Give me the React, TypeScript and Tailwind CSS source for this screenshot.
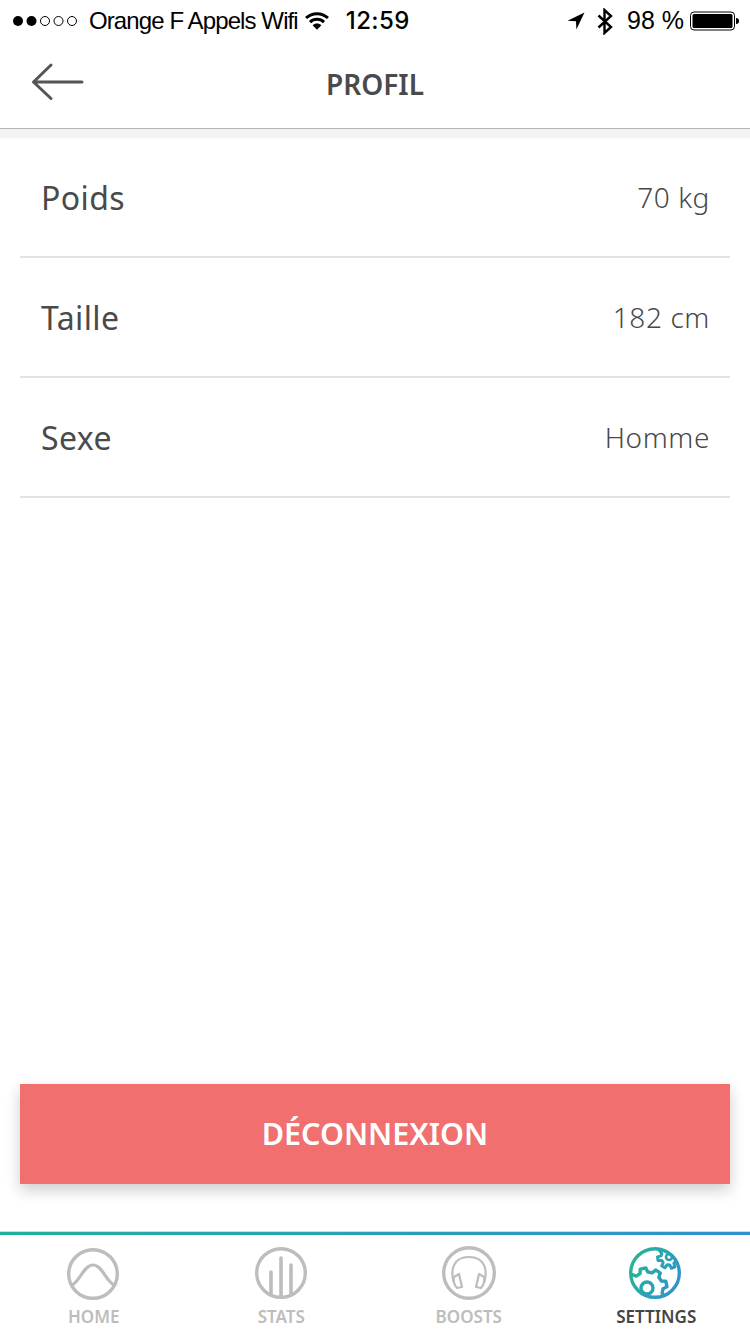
import React from "react";

const ui = { fontFamily: '"Noto Sans", "Open Sans", sans-serif' };
const ios = { fontFamily: '"Liberation Sans", Arial, sans-serif' };
const clock = { fontFamily: 'Inter, "Liberation Sans", sans-serif' };

// Outline of a toothed wheel, used twice in the settings glyph.
function gearPath(cx: number, cy: number, inner: number, outer: number, teeth: number, phase: number) {
  const step = (Math.PI * 2) / teeth;
  const pts: string[] = [];
  for (let i = 0; i < teeth; i++) {
    const a = phase + i * step;
    const offsets: [number, number][] = [
      [-0.32, inner],
      [-0.18, outer],
      [0.18, outer],
      [0.32, inner],
    ];
    offsets.forEach(([o, r]) => {
      const t = a + o * step;
      pts.push(`${(cx + r * Math.cos(t)).toFixed(2)} ${(cy + r * Math.sin(t)).toFixed(2)}`);
    });
  }
  return `M${pts.join(" L")} Z`;
}

function SignalDots() {
  return (
    <svg width="68" height="14" viewBox="0 0 68 14" className="shrink-0">
      <circle cx="6" cy="7" r="5" fill="#000" />
      <circle cx="19.5" cy="7" r="5" fill="#000" />
      {[33, 46.5, 60].map((cx) => (
        <circle key={cx} cx={cx} cy="7" r="4.5" fill="none" stroke="#000" strokeWidth="1" />
      ))}
    </svg>
  );
}

function Wifi() {
  return (
    <svg width="24" height="18" viewBox="0 0 24 18" className="shrink-0">
      <path d="M1 6 C7.2 0.2 16.8 0.2 23 6" fill="none" stroke="#000" strokeWidth="3" />
      <path d="M5 10.2 C9 6.4 15 6.4 19 10.2" fill="none" stroke="#000" strokeWidth="3" />
      <path d="M7.6 13.2 C10.2 11 13.8 11 16.4 13.2 L12 17.8 Z" fill="#000" />
    </svg>
  );
}

function Location() {
  return (
    <svg width="18" height="18" viewBox="0 0 18 18" className="shrink-0">
      <path d="M17.5 0.5 L0.5 8.8 L9 9.2 L9.4 17.5 Z" fill="#000" />
    </svg>
  );
}

function Bluetooth() {
  return (
    <svg width="16" height="27" viewBox="0 0 16 27" className="shrink-0">
      <path d="M1.5 7.5 L14 19 L7.5 25 V2 L14 8 L1.5 19.5" fill="none" stroke="#000" strokeWidth="2.4" />
    </svg>
  );
}

function Battery() {
  return (
    <svg width="50" height="20" viewBox="0 0 50 20" className="shrink-0">
      <rect x="0.5" y="1" width="44" height="18" rx="3.5" fill="none" stroke="#000" strokeWidth="1" />
      <rect x="2.5" y="3" width="40" height="14" rx="1.5" fill="#000" />
      <path d="M46 7 C48 7 49 8.2 49 10 C49 11.8 48 13 46 13 Z" fill="#000" />
    </svg>
  );
}

function BackArrow() {
  return (
    <svg width="54" height="40" viewBox="0 0 54 40">
      <path d="M52 21 H3.5 M21 4 L3.5 21 L21 37.5" fill="none" stroke="#555555" strokeWidth="3" strokeLinecap="round" strokeLinejoin="round" />
    </svg>
  );
}

function HomeIcon() {
  return (
    <svg width="54" height="54" viewBox="0 0 54 54">
      <circle cx="26" cy="27" r="24.3" fill="none" stroke="#bdbdbd" strokeWidth="3.4" />
      <path d="M5 38 C13 34 17 18 26 18 C35 18 39 34 47 38" fill="none" stroke="#bdbdbd" strokeWidth="3.2" />
    </svg>
  );
}

function StatsIcon() {
  return (
    <svg width="54" height="54" viewBox="0 0 54 54">
      <circle cx="27" cy="26" r="24.3" fill="none" stroke="#bdbdbd" strokeWidth="3.4" />
      <path d="M17 48 V25 M27 50 V11 M37 48 V18" fill="none" stroke="#bdbdbd" strokeWidth="3.6" strokeLinecap="round" />
    </svg>
  );
}

function BoostsIcon() {
  return (
    <svg width="56" height="56" viewBox="0 0 56 56">
      <circle cx="28" cy="27" r="25.3" fill="none" stroke="#bdbdbd" strokeWidth="3.4" />
      <path d="M13 37 C9 24 12 11 28 11 C44 11 47 24 43 37" fill="none" stroke="#bdbdbd" strokeWidth="2.2" />
      <path d="M18 28 L21 41 L16 42 C13 39 12 34 13 31 Z M38 28 L35 41 L40 42 C43 39 44 34 43 31 Z" fill="none" stroke="#bdbdbd" strokeWidth="2.2" strokeLinejoin="round" />
    </svg>
  );
}

function SettingsIcon() {
  return (
    <svg width="54" height="54" viewBox="0 0 54 54">
      <defs>
        <linearGradient id="tealBlue" gradientUnits="userSpaceOnUse" x1="2" y1="14" x2="52" y2="40">
          <stop offset="0" stopColor="#25b595" />
          <stop offset="1" stopColor="#3191cf" />
        </linearGradient>
        <clipPath id="globe">
          <circle cx="26" cy="26" r="25" />
        </clipPath>
      </defs>
      <g fill="none" stroke="url(#tealBlue)" strokeWidth="3.4" strokeLinejoin="round">
        <circle cx="26" cy="26" r="24.3" />
        <g clipPath="url(#globe)">
          <path d={gearPath(18, 41, 16, 20, 8, -0.2)} />
          <path d={gearPath(40, 10, 8, 11.5, 7, 0.3)} strokeWidth="3" />
        </g>
        <circle cx="18" cy="41" r="6" />
        <circle cx="40" cy="10" r="3" strokeWidth="2.6" />
      </g>
    </svg>
  );
}

function ProfileRow({ label, value }: { label: string; value: string }) {
  return (
    <div className="flex h-[120px] items-center justify-between border-b-2 border-[#e3e3e3] pr-[20px] pl-[21px]">
      <span className="pt-[2px] text-[32px] tracking-[0.4px] text-[#4a4a4a]">{label}</span>
      <span className="text-[28px] font-light tracking-[0.6px] text-[#484848]">{value}</span>
    </div>
  );
}

function Tab({ icon, label, active }: { icon: React.ReactNode; label: string; active?: boolean }) {
  return (
    <div className="flex w-[187.5px] flex-col items-center">
      <div className="flex h-[54px] items-center justify-center">{icon}</div>
      <span className={`mt-[4px] text-[17px] leading-[24px] font-semibold ${active ? "text-[#444444]" : "text-[#bdbdbd]"}`}>
        {label}
      </span>
    </div>
  );
}

export default function App() {
  return (
    <div className="flex h-[1334px] w-[750px] flex-col bg-white" style={ui}>
      <div className="flex h-[40px] items-center justify-between pt-[2px] pr-[10px] pl-[12px] text-black" style={ios}>
        <div className="flex items-center">
          <SignalDots />
          <span className="ml-[9px] text-[24px] tracking-[-0.9px]">Orange F Appels Wifi</span>
          <span className="ml-[7px]"><Wifi /></span>
          <span className="ml-[17px] text-[24px] font-medium tracking-[0.4px]" style={clock}>12:59</span>
        </div>
        <div className="flex items-center">
          <Location />
          <span className="ml-[12px]"><Bluetooth /></span>
          <span className="ml-[14px] text-[25px]">98 %</span>
          <span className="ml-[6px]"><Battery /></span>
        </div>
      </div>

      <header className="relative flex h-[89px] items-center justify-center border-b border-[#b5b5b5]">
        <div className="absolute top-[21px] left-[30px]"><BackArrow /></div>
        <h1 className="text-[28px] font-semibold text-[#4a4a4a]">PROFIL</h1>
      </header>
      <div className="h-[9px] bg-[#f3f3f3]" />

      <div className="mx-[20px]">
        <ProfileRow label="Poids" value="70 kg" />
        <ProfileRow label="Taille" value="182 cm" />
        <ProfileRow label="Sexe" value="Homme" />
      </div>

      <div className="flex-1" />

      <button className="mx-[20px] mb-[47px] h-[100px] bg-[#f16f6f] text-[30.5px] font-semibold text-white shadow-[0_6px_14px_rgba(0,0,0,0.2)]">
        DÉCONNEXION
      </button>

      <div className="h-[1px] bg-[#d9d9d9]" />
      <div className="h-[3px] bg-gradient-to-r from-[#22b09a] to-[#3191cf]" />
      <nav className="flex h-[99px] pt-[12px]">
        <Tab icon={<HomeIcon />} label="HOME" />
        <Tab icon={<StatsIcon />} label="STATS" />
        <Tab icon={<BoostsIcon />} label="BOOSTS" />
        <Tab icon={<SettingsIcon />} label="SETTINGS" active />
      </nav>
    </div>
  );
}
